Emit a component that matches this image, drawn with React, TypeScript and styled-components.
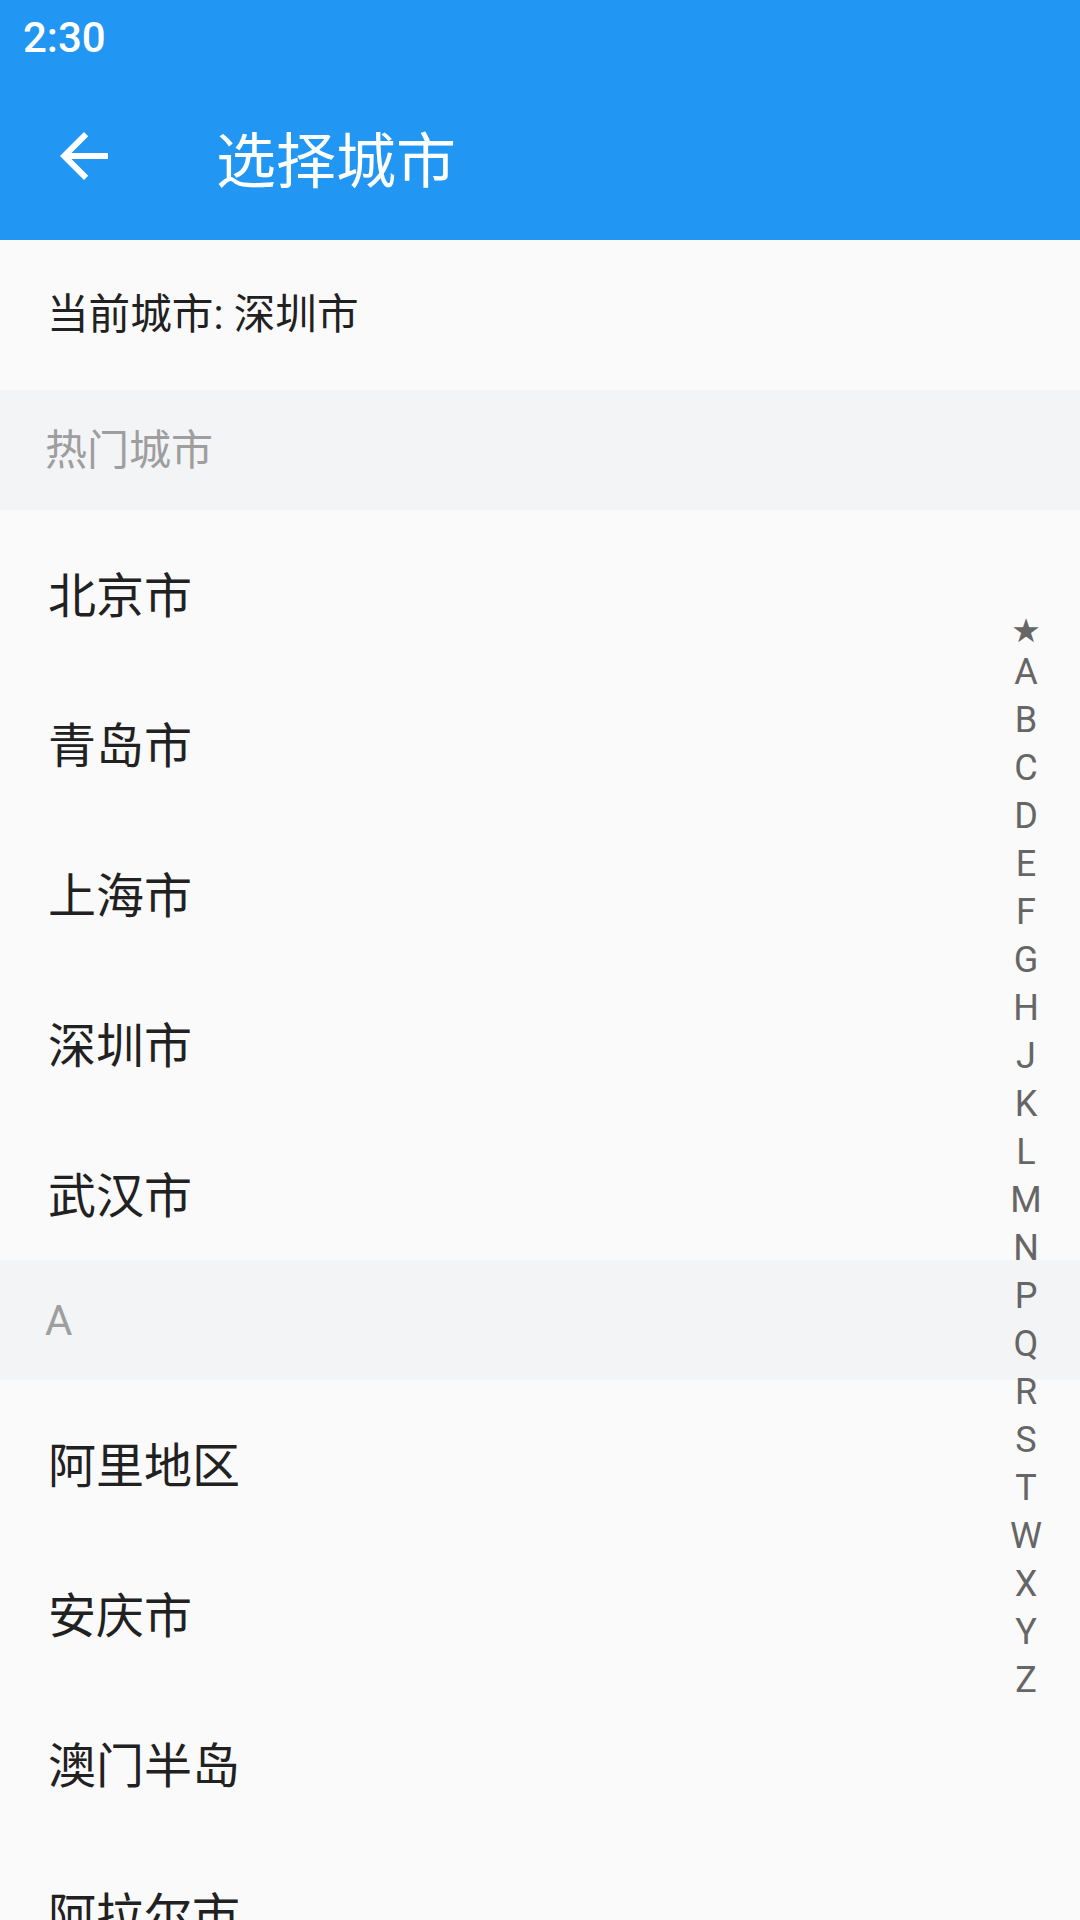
import React from "react";
import styled, { createGlobalStyle } from "styled-components";

const GlobalStyle = createGlobalStyle`
  html, body {
    margin: 0;
    padding: 0;
    background: #fafafa;
  }
  body {
    font-family: Roboto, "Noto Sans CJK SC", "Noto Sans", sans-serif;
  }
`;

const Page = styled.div`
  position: relative;
  width: 1080px;
  height: 1920px;
  overflow: hidden;
  background: #fafafa;
`;

const StatusBar = styled.div`
  height: 72px;
  background: #2196f3;
  color: #ffffff;
  display: flex;
  align-items: center;
  padding: 3px 0 0 23px;
  box-sizing: border-box;
  font-size: 42px;
  font-weight: 500;
`;

const Toolbar = styled.header`
  height: 168px;
  background: #2196f3;
  display: flex;
  align-items: center;
  color: #ffffff;
`;

const BackButton = styled.button`
  width: 72px;
  height: 72px;
  margin-left: 48px;
  padding: 0;
  border: none;
  background: transparent;
  display: flex;
  align-items: center;
  justify-content: center;
  color: #ffffff;
`;

const Title = styled.h1`
  margin: 0 0 0 96px;
  font-size: 60px;
  font-weight: 400;
  color: #ffffff;
`;

const CurrentCity = styled.div`
  height: 150px;
  box-sizing: border-box;
  display: flex;
  align-items: center;
  padding: 0 0 8px 47px;
  font-size: 41.6px;
  color: #212121;
  background: #fafafa;
`;

const SectionHeader = styled.div<{ $latin?: boolean }>`
  height: 120px;
  box-sizing: border-box;
  display: flex;
  align-items: center;
  padding: ${(p) => (p.$latin ? "0 0 0 45px" : "0 0 8px 45px")};
  font-size: 42px;
  color: #9e9e9e;
  background: #f3f4f6;
`;

const CityRow = styled.div`
  height: 150px;
  box-sizing: border-box;
  display: flex;
  align-items: center;
  padding: 14px 0 0 48px;
  font-size: 48px;
  color: #212121;
  background: #fafafa;
`;

const IndexBar = styled.nav`
  position: absolute;
  top: 606px;
  right: 18px;
  width: 72px;
  display: flex;
  flex-direction: column;
  align-items: center;
  color: #666666;
  font-size: 36px;
`;

const IndexStar = styled.span`
  height: 42px;
  display: flex;
  align-items: flex-end;
  line-height: 34px;
  font-family: "DejaVu Sans", sans-serif;
  font-size: 33px;
`;

const IndexLetter = styled.span`
  height: 48px;
  line-height: 48px;
`;

const hotCities = ["北京市", "青岛市", "上海市", "深圳市", "武汉市"];
const aCities = ["阿里地区", "安庆市", "澳门半岛", "阿拉尔市"];
const letters = "ABCDEFGHJKLMNPQRSTWXYZ".split("");

export default function App() {
  return (
    <>
      <GlobalStyle />
      <Page>
        <StatusBar>2:30</StatusBar>
        <Toolbar>
          <BackButton aria-label="返回">
            <svg width="72" height="72" viewBox="0 0 24 24" fill="#ffffff">
              <path d="M20 11H7.83l5.59-5.59L12 4l-8 8 8 8 1.41-1.41L7.83 13H20v-2z" />
            </svg>
          </BackButton>
          <Title>选择城市</Title>
        </Toolbar>
        <CurrentCity>当前城市: 深圳市</CurrentCity>
        <SectionHeader>热门城市</SectionHeader>
        {hotCities.map((c) => (
          <CityRow key={c}>{c}</CityRow>
        ))}
        <SectionHeader $latin>A</SectionHeader>
        {aCities.map((c) => (
          <CityRow key={c}>{c}</CityRow>
        ))}
        <IndexBar>
          <IndexStar>★</IndexStar>
          {letters.map((l) => (
            <IndexLetter key={l}>{l}</IndexLetter>
          ))}
        </IndexBar>
      </Page>
    </>
  );
}
